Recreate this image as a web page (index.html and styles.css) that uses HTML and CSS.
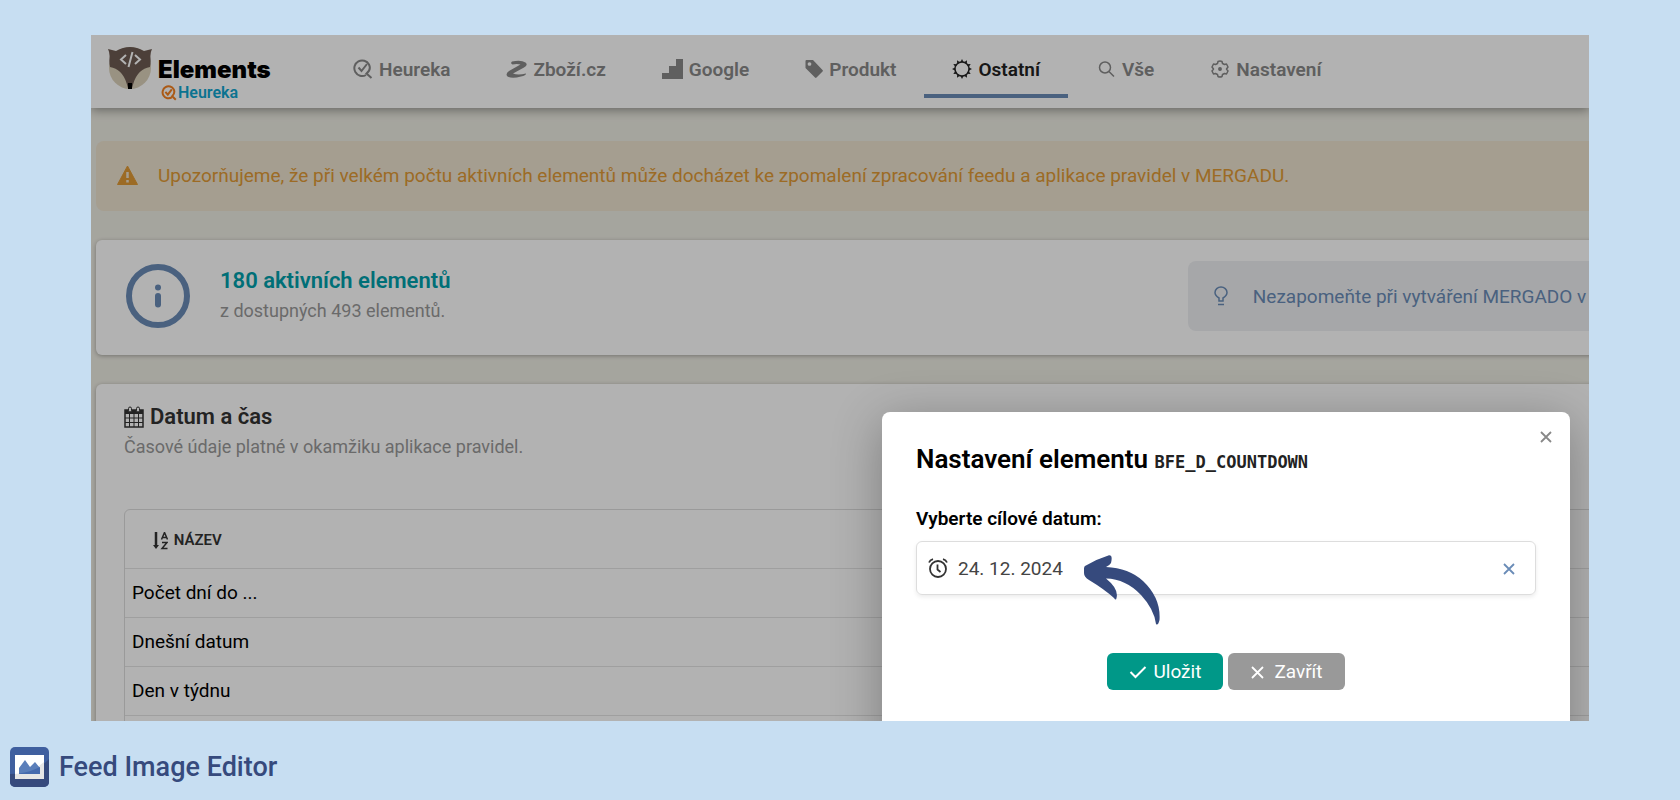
FILE: index.html
```html
<!DOCTYPE html>
<html lang="cs">
<head>
    <meta charset="UTF-8">
    <meta name="viewport" content="width=device-width, initial-scale=1.0">
    <title>Feed Image Editor</title>
    <link rel="stylesheet" href="styles.css">
</head>
<body>
    <main class="frame">
        <!-- Navigation Menu -->
        <header class="topbar">
            <a class="brand" href="#">
                <svg class="brand-logo" viewBox="0 0 44 44" width="44" height="44">
                    <circle cx="22" cy="22" r="21" fill="#dcd2bb"/>
                    <path d="M0 3 L8 5 Q22 -3 36 5 L44 3 Q42 7 42.500 12 Q43 17 42 21 Q30 23 25.500 37 L24 42 H20 L18.500 37 Q14 23 2 21 Q1 17 1.500 12 Q2 7 0 3Z" fill="#6d5b52"/>
                    <path d="M20 37h4v6h-4z" fill="#000"/>
                    <path d="M18 9l-5 4.500 5 4.500M27 9l5 4.500-5 4.500M24.500 6l-4 15" fill="none" stroke="#fff" stroke-width="2"/>
                </svg>
                <span class="brand-text">
                    <span class="brand-name">Elements</span>
                    <span class="brand-sub">
                        <svg viewBox="0 0 20 20" width="16" height="16" fill="none" stroke="#f58220" stroke-width="2.500"><path d="M13.500 15.500A7.500 7.500 0 1 1 16 5.500Q18 10 14 14l4.500 4.500"/><path d="M5.500 8.500l3 3.500 5-6.500"/></svg>
                        Heureka
                    </span>
                </span>
            </a>
            <nav class="menu">
                <a href="#">
                    <svg viewBox="0 0 20 20" width="20" height="20" fill="none" stroke="currentColor" stroke-width="2"><path d="M13 16A7.800 7.800 0 1 1 16 5.500Q18.500 10.500 13.500 14.500l5 4.500"/><path d="M5.500 8.500l3 3.500 5.500-7"/></svg>
                    Heureka
                </a>
                <a href="#">
                    <svg viewBox="0 0 21 20" width="21" height="20" fill="currentColor"><path d="M6 2.500Q15 .5 19.500 3.500Q22.500 6 18 8.500L7 14.500Q12 16.500 20 14.500Q20.500 16.500 15 17.500Q6 20 1.500 17.500Q-1 15 3 12L14.500 5.500Q11 4.500 6.500 5.500Q4 4.500 6 2.500Z"/></svg>
                    Zboží.cz
                </a>
                <a href="#">
                    <svg viewBox="0 0 21 20" width="21" height="20" fill="currentColor"><path d="M14 0h7v20H0v-6h7V7h7z"/></svg>
                    Google
                </a>
                <a href="#">
                    <svg viewBox="0 0 18 20" width="18" height="20" fill="currentColor"><path fill-rule="evenodd" d="M1.500 1H8l9.500 10a1 1 0 0 1 0 1.500l-6 6a1 1 0 0 1-1.500 0L.5 9V2a1 1 0 0 1 1-1zM4.500 3.200a1.800 1.800 0 1 0 .01 0z"/></svg>
                    Produkt
                </a>
                <a href="#" class="active">
                    <svg viewBox="0 0 20 20" width="20" height="20"><circle cx="10" cy="10" r="7" fill="none" stroke="currentColor" stroke-width="1.500"/><path d="M10 0l1.500 3h-3zM10 20l1.500-3h-3zM0 10l3-1.500v3zM20 10l-3-1.500v3zM15 1.300l-.2 3.400-2.600-1.500zM5 1.300l.2 3.400 2.600-1.500zM15 18.700l-.2-3.400-2.600 1.500zM5 18.700l.2-3.400 2.600 1.500zM18.700 5l-3.400.2 1.500 2.600zM1.300 5l3.400.2-1.500 2.600zM18.700 15l-3.400-.2 1.500-2.600zM1.300 15l3.400-.2-1.500-2.600z" fill="currentColor"/></svg>
                    Ostatní
                </a>
                <a href="#">
                    <svg viewBox="-2 0 20 20" width="20" height="20" fill="none" stroke="currentColor" stroke-width="1.500"><circle cx="7" cy="8.500" r="5.500"/><path d="M11 12.500l5 5"/></svg>
                    Vše
                </a>
                <a href="#">
                    <svg viewBox="-1 0 20 20" width="20" height="20" fill="none" stroke="currentColor" stroke-width="1.500" stroke-linejoin="round"><path d="M7 2.500Q9 1.500 11 2.500L11.500 4.500L13.500 5.500L15.500 5L17 8L15.500 10L17 12L15.500 15L13.500 14.500L11.500 15.500L11 17.500Q9 18.500 7 17.500L6.500 15.500L4.500 14.500L2.500 15L1 12L2.500 10L1 8L2.500 5L4.500 5.500L6.500 4.500Z"/><circle cx="9" cy="10" r="1.200" fill="currentColor"/></svg>
                    Nastavení
                </a>
            </nav>
        </header>

        <div class="content">
            <div class="alert">
                <svg viewBox="0 0 21 20" width="21" height="20"><path d="M10.500 1L20.500 19.500H.5Z" fill="currentColor" stroke="currentColor" stroke-linejoin="round"/><path d="M10.500 7v6M10.500 15v2.500" stroke="#ede2ce" stroke-width="2.500"/></svg>
                <span>Upozorňujeme, že při velkém počtu aktivních elementů může docházet ke zpomalení zpracování feedu a aplikace pravidel v MERGADU.</span>
            </div>

            <section class="card summary">
                <svg viewBox="0 0 64 64" width="64" height="64"><circle cx="32" cy="32" r="29" fill="none" stroke="#6a8cb7" stroke-width="6"/><circle cx="32" cy="23.500" r="3" fill="#6a8cb7"/><path d="M32 32v8.500" stroke="#6a8cb7" stroke-width="6" stroke-linecap="round"/></svg>
                <div class="summary-text">
                    <h2>180 aktivních elementů</h2>
                    <p>z dostupných 493 elementů.</p>
                </div>
                <div class="tip">
                    <svg viewBox="0 0 14 20" width="14" height="20" fill="none" stroke="currentColor" stroke-width="1.500"><path d="M5 15v-3Q1 9.500 1 6.500A6 5.500 0 0 1 13 6.500Q13 9.500 9 12v3zM4 18.500h6"/></svg>
                    <span>Nezapomeňte při vytváření MERGADO v</span>
                </div>
            </section>

            <section class="card elements">
                <h2>
                    <svg viewBox="0 0 20 22" width="20" height="22"><path d="M1 4h18v17H1z" fill="none" stroke="currentColor" stroke-width="1.500"/><path d="M1 4h18v4H1z" fill="currentColor"/><path d="M5.500 8v13M10 8v13M14.500 8v13M1 12h18M1 16.500h18" stroke="currentColor"/><rect x="4.500" y="1" width="3" height="5" rx="1.500" fill="#fff" stroke="currentColor"/><rect x="12.500" y="1" width="3" height="5" rx="1.500" fill="#fff" stroke="currentColor"/></svg>
                    Datum a čas
                </h2>
                <p>Časové údaje platné v okamžiku aplikace pravidel.</p>
                <div class="table-box">
                    <table class="grid-table">
                        <thead>
                            <tr>
                                <th>
                                    <svg viewBox="0 0 15 18" width="15" height="18" fill="none" stroke="currentColor" stroke-width="1.500"><path d="M3 0v14" stroke-width="2.500"/><path d="M0 13h6l-3 4z" fill="currentColor" stroke="none"/><path d="M8.500 7.500L11.500.5 14.500 7.500M9.500 5.500h4M9 10.500h5l-5 6h5.500"/></svg>
                                    NÁZEV
                                </th>
                            </tr>
                        </thead>
                        <tbody>
                            <tr><td>Počet dní do ...</td></tr>
                            <tr><td>Dnešní datum</td></tr>
                            <tr><td>Den v týdnu</td></tr>
                            <tr><td></td></tr>
                        </tbody>
                    </table>
                </div>
            </section>
        </div>

        <div class="overlay"></div>

        <!-- Element settings dialog -->
        <div class="modal" role="dialog" aria-labelledby="modalTitle">
            <button class="close" type="button" aria-label="Zavřít">
                <svg viewBox="0 0 12 12" width="12" height="12"><path d="M1 1l10 10M11 1L1 11" stroke="currentColor" stroke-width="1.800"/></svg>
            </button>
            <h1 id="modalTitle">Nastavení elementu <code>BFE_D_COUNTDOWN</code></h1>
            <label for="targetDate">Vyberte cílové datum:</label>
            <div class="date-field">
                <svg viewBox="0 0 20 20" width="20" height="20" fill="none" stroke="#333" stroke-width="1.800"><circle cx="10" cy="11" r="8"/><path d="M9.500 6.500v5l3 2.500M1 4.500Q2 2 5 1.200M19 4.500Q18 2 15 1.200"/></svg>
                <input type="text" id="targetDate" value="24. 12. 2024">
                <button class="clear" type="button" aria-label="Smazat">
                    <svg viewBox="0 0 12 12" width="12" height="12"><path d="M1 1l10 10M11 1L1 11" stroke="currentColor" stroke-width="1.800"/></svg>
                </button>
            </div>
            <div class="actions">
                <button class="btn save" type="button">
                    <svg viewBox="0 0 18 14" width="18" height="14"><path d="M1.500 7l5 5L16.500 2" fill="none" stroke="currentColor" stroke-width="2"/></svg>
                    Uložit
                </button>
                <button class="btn cancel" type="button">
                    <svg viewBox="0 0 18 14" width="18" height="14"><path d="M2 2l11 11M13 2L2 13" stroke="currentColor" stroke-width="1.800"/></svg>
                    Zavřít
                </button>
            </div>
            <svg class="arrow" viewBox="0 0 76 70" width="76" height="70"><path d="M1 11Q13 4 25 .3Q29 0 27 8Q26 10 22 12Q45 13 59 26Q77 43 75.500 65Q74 71 72 69Q70 54 57 40Q42 24 22 23.500Q35 34 32.500 43Q32 46 30 43Q20 34 5 25Q0 22 0 18Q-.5 12 1 11Z" fill="#364a7d"/></svg>
        </div>
    </main>

    <footer class="app-name">
        <svg viewBox="0 0 39 40" width="39" height="40"><rect width="39" height="40" rx="5" fill="#3f5f9f"/><path d="M0 27Q25 27 39 12V35a5 5 0 0 1-5 5H5a5 5 0 0 1-5-5z" fill="#364a7d"/><path d="M5 8h29v24H5z" fill="#fff"/><path d="M5 27Q22 26 34 15v17H5z" fill="#e6e6e6"/><path d="M9 27v-6l6-8 5 7 5-5 5 6v6z" fill="#5b7fba"/><path d="M9 26.500Q20 25 30 20v7H9z" fill="#456aad"/></svg>
        <span>Feed Image Editor</span>
    </footer>
</body>
</html>
```
FILE: styles.css
```css
* {
    box-sizing: border-box;
}
body {
    margin: 0;
    min-height: 100vh;
    padding: 35px 91px 0;
    display: flex;
    flex-direction: column;
    background-color: #c7def2;
    font-family: Roboto, sans-serif;
    font-size: 19px;
    color: #000;
}
h1, h2, p {
    margin: 0;
}
svg {
    flex-shrink: 0;
}
a {
    text-decoration: none;
}
button {
    border: none;
    padding: 0;
    background: none;
    font: inherit;
    cursor: pointer;
}
.frame {
    position: relative;
    flex: 1 0 0;
    overflow: hidden;
    background-color: #edece3;
}
.topbar {
    position: relative;
    display: flex;
    height: 73px;
    background-color: #fff;
    box-shadow: 0 2px 10px rgba(0, 0, 0, 0.4);
}
.brand {
    display: flex;
    width: 234px;
    padding: 11px 0 0 17px;
    gap: 6px;
}
.brand-text {
    display: flex;
    flex-direction: column;
    padding-top: 10px;
}
.brand-name {
    font-family: Inter, sans-serif;
    font-size: 24px;
    font-weight: 900;
    line-height: 28px;
    color: #000;
}
.brand-sub {
    display: flex;
    align-items: center;
    gap: 1px;
    padding-left: 3px;
    font-size: 16px;
    font-weight: 600;
    line-height: 18px;
    color: #10a5cf;
}
.menu {
    display: flex;
    height: 63px;
}
.menu a {
    display: flex;
    align-items: center;
    gap: 6px;
    padding: 9px 28px 0;
    border-bottom: 4px solid transparent;
    font-weight: 600;
    color: #888;
}
.menu .active {
    border-color: #6a8cb7;
    color: #222;
}
.content {
    display: flex;
    flex-direction: column;
    gap: 29px;
    width: 110%;
    padding: 33px 0 0 5px;
}
.alert {
    display: flex;
    align-items: center;
    gap: 20px;
    height: 70px;
    padding: 0 21px 2px;
    border-radius: 8px;
    background-color: #ede2ce;
    color: #e09a35;
}
.card {
    border-radius: 6px;
    background-color: #fff;
    box-shadow: 0 1px 4px rgba(0, 0, 0, 0.3);
}
.card h2 {
    font-size: 22px;
    font-weight: 600;
    line-height: 30px;
}
.card p {
    font-size: 18px;
    line-height: 30px;
    color: #999;
}
.summary {
    display: flex;
    align-items: center;
    gap: 30px;
    height: 115px;
    padding: 0 30px 3px;
}
.summary h2 {
    color: #00a0ab;
}
.tip {
    display: flex;
    align-items: center;
    gap: 25px;
    width: 521px;
    height: 70px;
    margin-left: auto;
    padding-left: 26px;
    border-radius: 8px;
    background-color: #eef0f3;
    color: #6a8cb7;
    white-space: nowrap;
}
.elements {
    padding: 18px 28px;
}
.elements h2 {
    display: flex;
    align-items: center;
    gap: 6px;
    color: #333;
}
.table-box {
    margin-top: 47px;
    border: 1px solid #ddd;
    border-radius: 6px;
}
.grid-table {
    width: 100%;
    border-collapse: collapse;
}
.grid-table th {
    height: 58px;
    padding: 4px 28px 0;
    font-size: 15px;
    font-weight: 600;
    text-align: left;
    color: #333;
}
.grid-table th svg {
    margin-right: 2px;
    vertical-align: middle;
}
.grid-table td {
    height: 49px;
    padding: 0 7px;
    border-top: 1px solid #e4e4e4;
}
.overlay {
    position: absolute;
    inset: 0;
    background-color: rgba(0, 0, 0, 0.3);
}
.modal {
    position: absolute;
    top: 377px;
    right: 19px;
    width: 688px;
    height: 350px;
    padding: 29px 34px;
    border-radius: 8px;
    background-color: #fff;
    box-shadow: 0 10px 50px rgba(0, 0, 0, 0.3);
}
.modal h1 {
    font-size: 26px;
    font-weight: 600;
    line-height: 36px;
}
.modal code {
    font-family: "DejaVu Sans Mono", monospace;
    font-size: 17px;
    color: #222;
}
.modal label {
    display: block;
    margin-top: 22px;
    font-weight: 600;
    line-height: 34px;
}
.close {
    position: absolute;
    top: 13px;
    right: 18px;
    color: #888;
}
.date-field {
    display: flex;
    align-items: center;
    gap: 10px;
    height: 54px;
    margin-top: 5px;
    padding: 0 20px 0 11px;
    border: 1px solid #ddd;
    border-radius: 6px;
    box-shadow: 0 2px 4px rgba(0, 0, 0, 0.08);
}
.date-field input {
    flex: 1;
    border: none;
    padding: 0;
    outline: none;
    font: inherit;
    color: #444;
}
.clear {
    color: #6a8cb7;
}
.actions {
    display: flex;
    justify-content: center;
    gap: 5px;
    margin-top: 58px;
}
.btn {
    display: flex;
    align-items: center;
    gap: 6px;
    height: 37px;
    padding: 0 22px;
    border-radius: 6px;
    color: #fff;
}
.save {
    background-color: #009888;
}
.cancel {
    background-color: #999;
}
.arrow {
    position: absolute;
    top: 143px;
    left: 202px;
}
.app-name {
    display: flex;
    align-items: center;
    gap: 10px;
    height: 79px;
    margin-left: -81px;
    padding-top: 12px;
    font-size: 27px;
    font-weight: 500;
    color: #364a7d;
}
```
